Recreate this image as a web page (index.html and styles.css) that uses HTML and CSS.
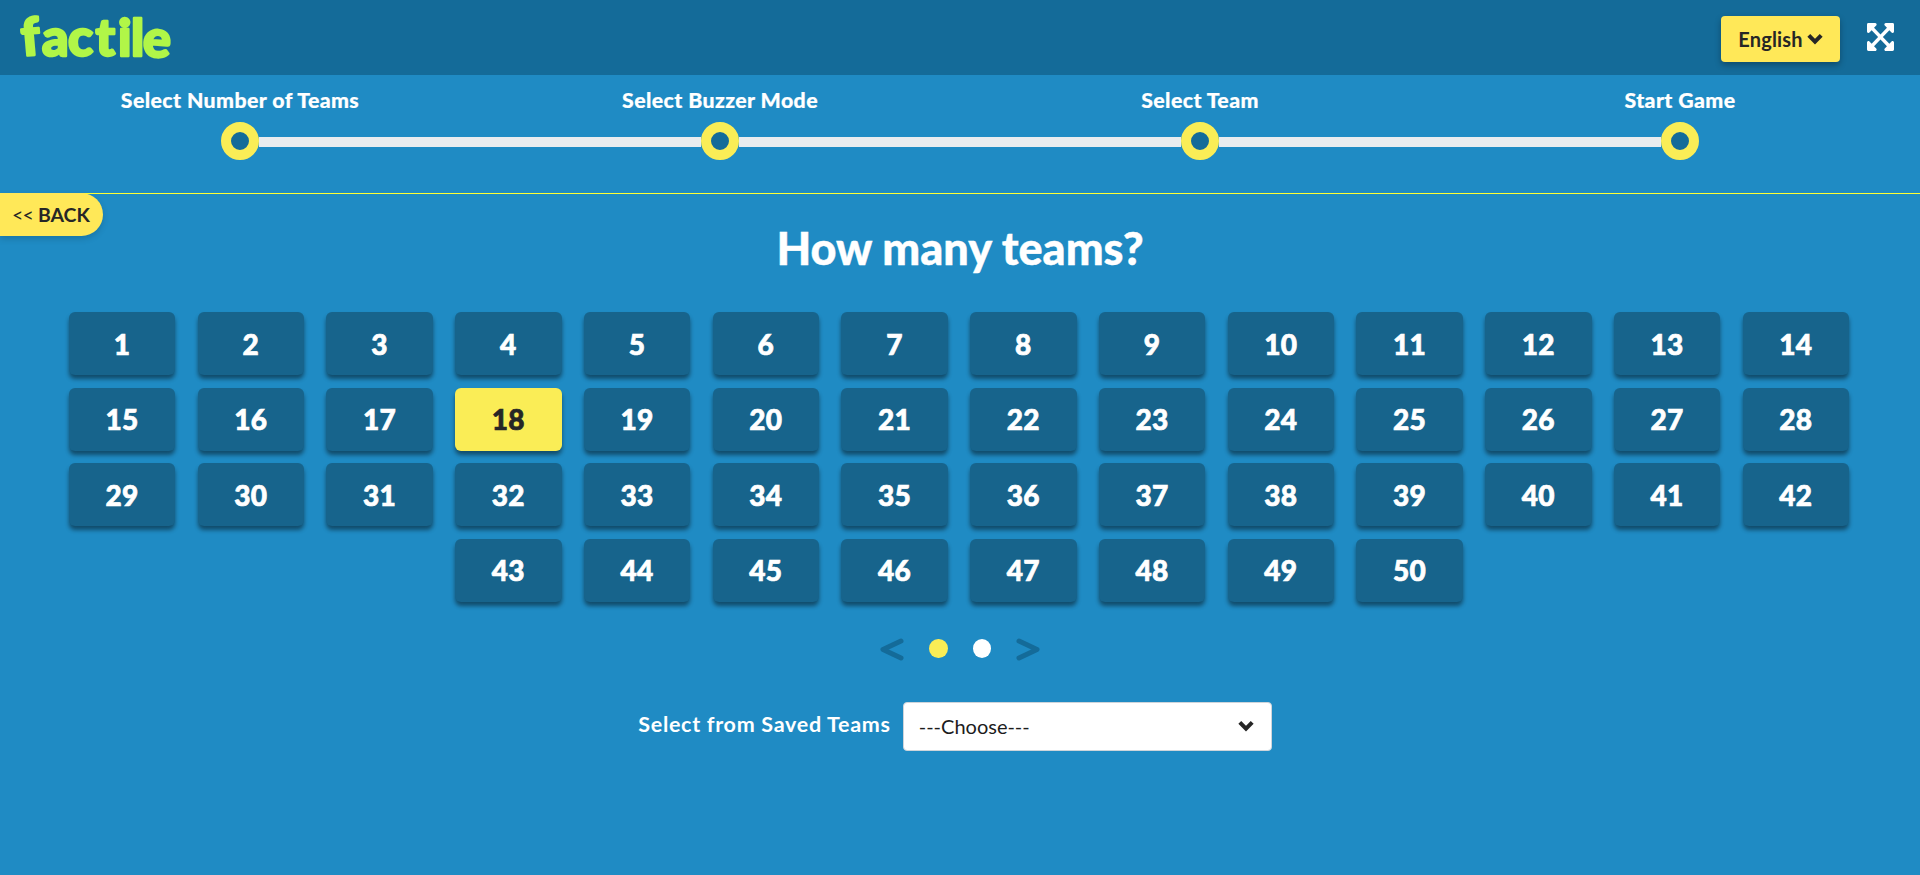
FILE: index.html
```html
<!DOCTYPE html>
<html lang="en">
<head>
<meta charset="utf-8">
<title>Factile</title>
<link rel="stylesheet" href="styles.css">
</head>
<body>
<header class="topbar">
  <svg class="logo" width="190" height="66" viewBox="0 0 190 66" aria-label="factile">
    <text y="48" x="8.5 28 54 81.5 104 117 128" rotate="-5 0 0 0 0 0 4">factile</text>
  </svg>
  <div class="tools">
    <button class="lang">English
      <svg width="16" height="12" viewBox="0 0 16 12"><path class="chev" d="M1.8 2.3 8 8.7 14.2 2.3"/></svg>
    </button>
    <svg class="expand" width="27" height="28" viewBox="0 32 448 448" preserveAspectRatio="none"><path d="M448 344v112a23.94 23.94 0 0 1-24 24H312c-21.39 0-32.09-25.9-17-41l36.2-36.2L224 295.6 116.77 402.9 153 439c15.09 15.1 4.39 41-17 41H24a23.94 23.94 0 0 1-24-24V344c0-21.4 25.89-32.1 41-17l36.19 36.2L184.46 256 77.18 148.7 41 185c-15.1 15.1-41 4.4-41-17V56a23.94 23.94 0 0 1 24-24h112c21.39 0 32.09 25.9 17 41l-36.2 36.2L224 216.4l107.23-107.3L295 73c-15.09-15.1-4.39-41 17-41h112a23.94 23.94 0 0 1 24 24v112c0 21.4-25.89 32.1-41 17l-36.19-36.2L263.54 256l107.28 107.3L407 327.1c15.1-15.2 41-4.5 41 16.9z"/></svg>
  </div>
</header>
<nav class="steps">
  <div class="step"><span class="step-label">Select Number of Teams</span><span class="track"><i class="bar off"></i><i class="ring"></i><i class="bar"></i></span></div>
  <div class="step"><span class="step-label">Select Buzzer Mode</span><span class="track"><i class="bar"></i><i class="ring"></i><i class="bar"></i></span></div>
  <div class="step"><span class="step-label">Select Team</span><span class="track"><i class="bar"></i><i class="ring"></i><i class="bar"></i></span></div>
  <div class="step"><span class="step-label">Start Game</span><span class="track"><i class="bar"></i><i class="ring"></i><i class="bar off"></i></span></div>
</nav>
<main class="main">
  <button class="back"><span class="arrows">&lt;&lt;</span> BACK</button>
  <h1 class="title">How many teams?</h1>
  <div class="grid">
    <button class="num">1</button><button class="num">2</button><button class="num">3</button><button class="num">4</button><button class="num">5</button><button class="num">6</button><button class="num">7</button><button class="num">8</button><button class="num">9</button><button class="num">10</button><button class="num">11</button><button class="num">12</button><button class="num">13</button><button class="num">14</button>
    <button class="num">15</button><button class="num">16</button><button class="num">17</button><button class="num selected">18</button><button class="num">19</button><button class="num">20</button><button class="num">21</button><button class="num">22</button><button class="num">23</button><button class="num">24</button><button class="num">25</button><button class="num">26</button><button class="num">27</button><button class="num">28</button>
    <button class="num">29</button><button class="num">30</button><button class="num">31</button><button class="num">32</button><button class="num">33</button><button class="num">34</button><button class="num">35</button><button class="num">36</button><button class="num">37</button><button class="num">38</button><button class="num">39</button><button class="num">40</button><button class="num">41</button><button class="num">42</button>
    <button class="num">43</button><button class="num">44</button><button class="num">45</button><button class="num">46</button><button class="num">47</button><button class="num">48</button><button class="num">49</button><button class="num">50</button>
  </div>
  <div class="pager">
    <svg width="24" height="24" viewBox="0 0 24 24"><path class="arrow" d="M21 3 3 11.5 21 20"/></svg>
    <span class="dots"><i class="dot on"></i><i class="dot"></i></span>
    <svg width="24" height="24" viewBox="0 0 24 24"><path class="arrow" d="M3 3 21 11.5 3 20"/></svg>
  </div>
  <div class="saved">
    <span class="saved-label">Select from Saved Teams</span>
    <div class="select"><span class="choose">---Choose---</span>
      <svg width="16" height="12" viewBox="0 0 16 12"><path class="chev" d="M1.8 2.3 8 8.7 14.2 2.3"/></svg>
    </div>
  </div>
</main>
</body>
</html>
```
FILE: styles.css
```css
* { box-sizing: border-box; }
body {
  margin: 0;
  height: 875px;
  overflow: hidden;
  background: #1f8bc4;
  color: #fff;
  font-family: Lato, "Open Sans", sans-serif;
}
button { border: 0; padding: 0; margin: 0; font-family: inherit; color: #262626; }
svg { display: block; }
.topbar {
  height: 75px;
  background: #146b99;
  display: flex;
  justify-content: space-between;
  align-items: flex-start;
  padding: 8px 26px 0 14px;
}
.logo { overflow: visible; fill: #b1f648; stroke: #b1f648; stroke-width: 2.4; stroke-linejoin: round; font-size: 52px; font-weight: 900; }
.tools { display: flex; gap: 27px; padding-top: 8px; }
.lang {
  width: 119px;
  height: 46px;
  border-radius: 4px;
  background: #ffe858;
  box-shadow: 0 3px 6px rgba(0, 0, 0, .3);
  display: flex;
  align-items: center;
  justify-content: center;
  gap: 4px;
  font-size: 20px;
  font-weight: 700;
  letter-spacing: .2px;
}
.chev { fill: none; stroke: #262626; stroke-width: 4; }
.expand { fill: #fff; margin-top: 7px; }
.steps {
  height: 119px;
  border-bottom: 1px solid #ffff33;
  display: grid;
  grid-template-columns: repeat(4, 1fr);
}
.step { display: flex; flex-direction: column; align-items: center; padding-top: 12px; }
.step-label {
  height: 35px;
  line-height: 26px;
  font-size: 21.3px;
  font-weight: 900;
  letter-spacing: .4px;
  -webkit-text-stroke: .2px #fff;
  white-space: nowrap;
}
.track { display: flex; align-items: center; width: 100%; height: 38px; }
.bar { flex: 1; height: 10px; background: #e9ecef; margin-top: 2px; }
.bar.off { background: none; }
.ring { width: 38px; height: 38px; border-radius: 50%; border: 10px solid #faed56; background: #146b99; }
.main { display: flex; flex-direction: column; align-items: center; }
.back {
  align-self: flex-start;
  width: 103px;
  height: 43px;
  margin-top: -1px;
  padding-right: 1px;
  border-radius: 0 22px 22px 0;
  background: #ffe858;
  box-shadow: 0 3px 6px rgba(0, 0, 0, .15);
  font-size: 19.5px;
  font-weight: 700;
}
.arrows { font-weight: 400; letter-spacing: -.8px; }
.title {
  margin: -16px 0 0;
  height: 92px;
  line-height: 56px;
  font-size: 45px;
  font-weight: 900;
  -webkit-text-stroke: .4px #fff;
}
.grid {
  width: 1803px;
  margin-right: 2px;
  display: flex;
  flex-wrap: wrap;
  justify-content: center;
  gap: 12.65px 22.4px;
}
.num {
  width: 106.37px;
  height: 63px;
  border-radius: 6px;
  background: #17648c;
  color: #fff;
  font-size: 28px;
  font-weight: 900;
  letter-spacing: .5px;
  -webkit-text-stroke: .7px currentColor;
  box-shadow: 0 4px 4px rgba(0, 0, 0, .45);
}
.num.selected { background: #faed56; color: #262626; }
.pager { display: flex; align-items: center; gap: 25px; margin-top: 36px; height: 24px; }
.arrow { fill: none; stroke: #146b99; stroke-width: 5; stroke-linecap: round; stroke-linejoin: round; }
.dots { display: flex; gap: 25px; margin-bottom: 3px; }
.dot { width: 18.5px; height: 19px; border-radius: 50%; background: #fff; }
.dot.on { background: #faed56; }
.saved { display: flex; margin: 40px 10px 0 0; gap: 12px; }
.saved-label { font-size: 21.5px; line-height: 44px; font-weight: 700; letter-spacing: .7px; white-space: nowrap; }
.select {
  width: 369px;
  height: 49px;
  padding: 0 17px 0 15px;
  border: 1px solid #ced4da;
  border-radius: 4px;
  background: #fff;
  color: #1c1c1c;
  display: flex;
  align-items: center;
  justify-content: space-between;
}
.choose { font-size: 20px; }
```
